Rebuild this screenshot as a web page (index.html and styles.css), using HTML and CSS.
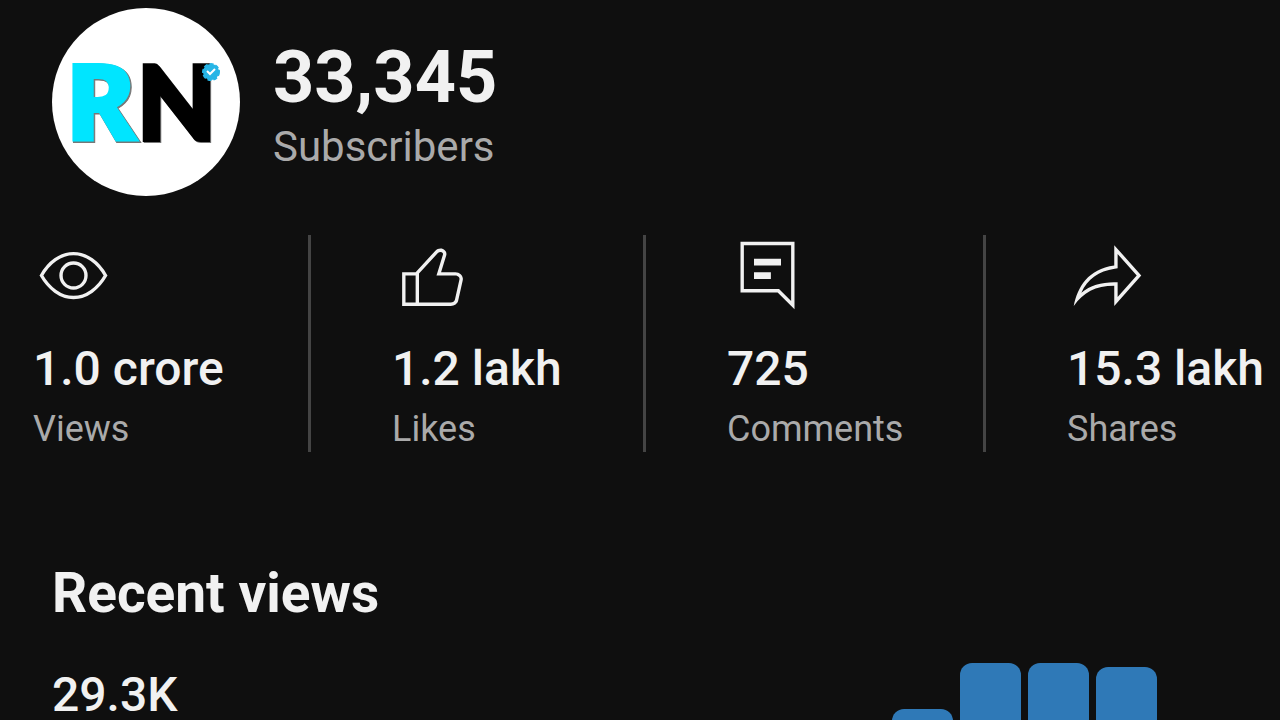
FILE: index.html
```
<!DOCTYPE html>
<html lang="en">
<head>
    <meta charset="UTF-8">
    <meta name="viewport" content="width=device-width, initial-scale=1.0">
    <title>Channel stats</title>
    <link rel="stylesheet" href="styles.css">
</head>
<body>
    <header class="channel">
        <svg class="avatar" viewBox="0 0 188 188" role="img" aria-label="RN">
            <circle cx="94" cy="94" r="94" fill="#fff"/>
            <text class="letter shade" x="13" y="135">R</text>
            <text class="letter letter-r" x="12" y="134">R</text>
            <text class="letter letter-n shade" x="86" y="133">N</text>
            <text class="letter letter-n" x="85" y="132">N</text>
            <circle cx="159" cy="64" r="8" fill="#27b5e6" stroke="#27b5e6" stroke-width="2" stroke-dasharray="4 2"/>
            <path d="M155 63l3 3 5-5" fill="none" stroke="#fff" stroke-width="2"/>
        </svg>
        <div>
            <h1 class="subs-count">33,345</h1>
            <p class="subs-label">Subscribers</p>
        </div>
    </header>

    <main>
        <section class="stats">
            <div class="stat">
                <svg class="icon" viewBox="0 0 24 24">
                    <path class="line" d="M2.5 12C4.7 8.2 8.1 5.5 12 5.5s7.3 2.7 9.5 6.5c-2.2 3.8-5.6 6.5-9.5 6.5S4.7 15.8 2.5 12z"/>
                    <circle class="line" cx="12" cy="12" r="3.7"/>
                </svg>
                <p class="value">1.0 crore</p>
                <p class="label">Views</p>
            </div>
            <div class="stat">
                <svg class="icon" viewBox="0 0 24 24">
                    <path d="M18.77 11h-4.23l1.52-4.94C16.38 5.03 15.54 4 14.38 4c-.58 0-1.14.24-1.52.65L7 11H3v10h14.43c1.06 0 1.98-.67 2.19-1.61l1.34-6C21.23 12.15 20.18 11 18.77 11zM7 20H4v-8h3v8zM19.98 13.17l-1.34 6c-.1.48-.61.83-1.21.83H8v-8.61l5.6-6.06c.19-.21.48-.33.78-.33.26 0 .5.11.63.3.07.1.15.26.09.47l-1.52 4.94-.4 1.29h5.58c.41 0 .8.17 1.03.46.13.15.26.4.19.71z"/>
                </svg>
                <p class="value">1.2 lakh</p>
                <p class="label">Likes</p>
            </div>
            <div class="stat">
                <svg class="icon" viewBox="0 0 24 24">
                    <path fill-rule="evenodd" d="M4 2h16v20l-5-5H4zM5 3v13h10.41L19 19.59V3z"/>
                    <path d="M8 7h8v2H8zM8 11h5v2H8z"/>
                </svg>
                <p class="value">725</p>
                <p class="label">Comments</p>
            </div>
            <div class="stat">
                <svg class="icon" viewBox="0 0 24 24">
                    <path fill-rule="evenodd" d="M15 5.63L20.66 12 15 18.37V14h-1c-3.96 0-7.14 1-9.75 3.09 1.84-4.07 5.11-6.4 9.89-7.1L15 9.86V5.63M14 3v6C6.22 10.13 3.11 15.33 2 21c2.78-3.97 6.44-6 12-6v6l8-9L14 3z"/>
                </svg>
                <p class="value">15.3 lakh</p>
                <p class="label">Shares</p>
            </div>
        </section>

        <section class="recent">
            <h2 class="recent-title">Recent views</h2>
            <div class="recent-row">
                <p class="recent-count">29.3K</p>
                <div class="chart">
                    <div class="bar" style="height: 18px"></div>
                    <div class="bar" style="height: 64px"></div>
                    <div class="bar" style="height: 64px"></div>
                    <div class="bar" style="height: 60px"></div>
                </div>
            </div>
        </section>
    </main>
</body>
</html>
```
FILE: styles.css
```
body {
    margin: 0;
    background-color: #0f0f0f;
    color: #f1f1f1;
    font-family: Roboto, sans-serif;
}

h1, h2, p {
    margin: 0;
}

.channel {
    display: flex;
    align-items: center;
    gap: 33px;
    padding: 8px 52px 0;
}

.avatar {
    width: 188px;
    height: 188px;
}

.letter {
    font-family: "Open Sans", sans-serif;
    font-size: 110px;
    font-weight: 800;
}

.letter-r {
    fill: #00e5ff;
}

.letter-n {
    font-family: Lato, sans-serif;
    font-size: 102px;
    font-weight: 900;
    stroke: #000;
    stroke-width: 4px;
}

.shade {
    fill: #777;
    stroke: #777;
}

.subs-count {
    font-size: 72px;
    font-weight: 700;
    line-height: 90px;
}

.subs-label {
    color: #aaa;
    font-size: 42px;
    line-height: 48px;
}

/* Stats row, one column per number */
.stats {
    display: grid;
    grid-template-columns: 311fr 335fr 340fr 294fr;
    margin-top: 39px;
}

.stat {
    padding-left: 81px;
    border-right: 3px solid #444;
    white-space: nowrap;
}

.stat:first-child {
    padding-left: 33px;
}

.stat:last-child {
    border-right: none;
}

.icon {
    display: block;
    width: 81px;
    height: 81px;
    margin-bottom: 16px;
    fill: #f1f1f1;
}

.line {
    fill: none;
    stroke: #f1f1f1;
    stroke-width: 1;
}

.value {
    font-size: 48px;
    font-weight: 500;
    line-height: 74px;
}

.label {
    color: #aaa;
    font-size: 36px;
    line-height: 46px;
}

.recent {
    padding-left: 52px;
    margin-top: 109px;
}

.recent-title {
    font-size: 55px;
    font-weight: 700;
    line-height: 64px;
}

.recent-row {
    display: flex;
    justify-content: space-between;
    align-items: center;
    margin-top: 38px;
    padding-right: 123px;
}

.recent-count {
    font-size: 48px;
    font-weight: 500;
    line-height: 56px;
}

.chart {
    display: flex;
    align-items: flex-end;
    gap: 7px;
}

.bar {
    width: 61px;
    border-radius: 12px 12px 0 0;
    background-color: #2f79b7;
}
```
